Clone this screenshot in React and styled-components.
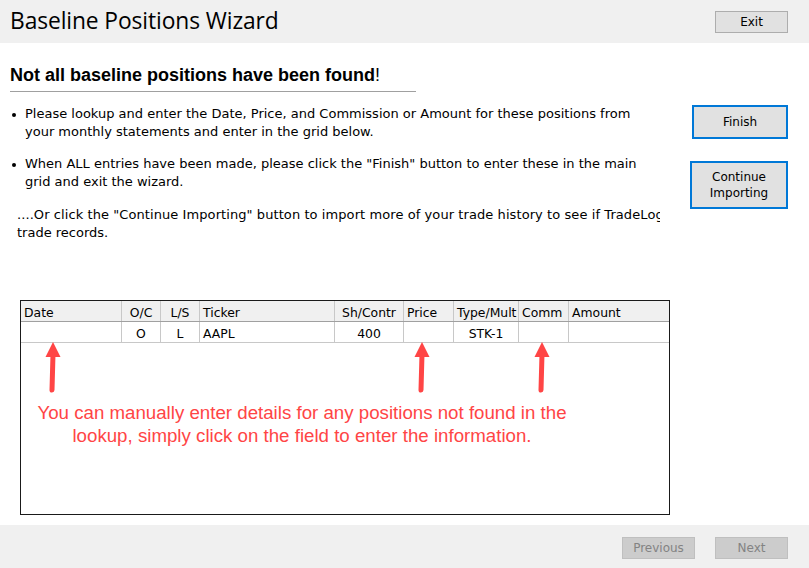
import React from "react";
import styled, { createGlobalStyle } from "styled-components";

const Global = createGlobalStyle`
  html, body { margin: 0; padding: 0; background: #ffffff; }
  * { box-sizing: border-box; }
`;

const Page = styled.div`
  width: 809px;
  height: 568px;
  display: flex;
  flex-direction: column;
  background: #ffffff;
  font-family: "DejaVu Sans", Tahoma, sans-serif;
  color: #000;
  overflow: hidden;
`;

const Bar = styled.div`
  height: 43px;
  flex: none;
  background: #f0f0f0;
  display: flex;
  align-items: ${(p) => (p.$footer ? "flex-start" : "center")};
  justify-content: ${(p) => (p.$footer ? "flex-end" : "space-between")};
  padding: ${(p) => (p.$footer ? "12px 21px 0 0" : "0 21px 0 10px")};
  gap: 20px;
`;

const Title = styled.h1`
  margin: 0 0 3px 0;
  font-family: "Open Sans", "Noto Sans", sans-serif;
  font-weight: 400;
  font-size: 22.8px;
  letter-spacing: -0.1px;
  color: #000;
`;

const WinButton = styled.button`
  width: 73px;
  height: 22px;
  margin-top: ${(p) => (p.$footer ? "0" : "1px")};
  background: ${(p) => (p.disabled ? "#cccccc" : "#e1e1e1")};
  border: 1px solid ${(p) => (p.disabled ? "#bfbfbf" : "#adadad")};
  color: ${(p) => (p.disabled ? "#838383" : "#000")};
  font-family: "DejaVu Sans", Tahoma, sans-serif;
  font-size: 12px;
  padding: 0;
`;

const Body = styled.div`
  flex: 1;
  display: flex;
  flex-direction: column;
  padding: 22px 0 0 0;
`;

const Heading = styled.h2`
  margin: 0 0 0 10px;
  width: 406px;
  font-family: "Liberation Sans", Arial, sans-serif;
  font-weight: 700;
  font-size: 18px;
  line-height: 20px;
  padding-bottom: 6px;
  border-bottom: 1px solid #a0a0a0;
`;

const Bang = styled.span`
  font-weight: 400;
`;

const InfoRow = styled.div`
  display: flex;
  margin-top: 13px;
  height: 195px;
`;

const TextCol = styled.div`
  width: 660px;
  flex: none;
  overflow: hidden;
  font-size: 13px;
  line-height: 17.5px;
`;

const Bullet = styled.div`
  display: flex;
  padding-left: 12px;
  margin-bottom: ${(p) => p.$mb}px;
  &::before {
    content: "";
    flex: none;
    width: 4px;
    height: 4px;
    border-radius: 50%;
    background: #000;
    margin: 8px 9px 0 0;
  }
`;

const BulletText = styled.div`
  width: 625px;
`;

const Para = styled.div`
  padding-left: 17px;
`;

const ClipLine = styled.div`
  white-space: nowrap;
  overflow: hidden;
  width: 643px;
  letter-spacing: 0.08px;
`;

const ButtonCol = styled.div`
  flex: 1;
  display: flex;
  flex-direction: column;
  align-items: flex-start;
`;

const BlueButton = styled.button`
  width: ${(p) => p.$w}px;
  height: ${(p) => p.$h}px;
  margin-left: ${(p) => p.$ml}px;
  margin-top: ${(p) => p.$mt}px;
  background: #e1e1e1;
  border: 2px solid #0078d7;
  font-family: "DejaVu Sans", Tahoma, sans-serif;
  font-size: 12px;
  line-height: 16px;
  padding: 0;
  color: #000;
`;

const GridBox = styled.div`
  position: relative;
  margin: 0 0 10px 20px;
  width: 650px;
  height: 215px;
  border: 1px solid #1a1a1a;
  background: #fff;
  font-size: 12.4px;
`;

const cols = "101px 39px 39px 135px 69px 50px 65px 50px 100px";

const GridRow = styled.div`
  display: grid;
  grid-template-columns: ${cols};
  height: 21px;
  background: ${(p) => (p.$head ? "#f0f0f0" : "#fff")};
  border-bottom: 1px solid ${(p) => (p.$head ? "#a0a0a0" : "#c8c8c8")};
`;

const Cell = styled.div`
  display: flex;
  align-items: center;
  justify-content: ${(p) => (p.$center ? "center" : "flex-start")};
  padding-left: ${(p) => (p.$center ? 0 : 3)}px;
  padding-top: 2px;
  border-right: 1px solid ${(p) => (p.$last ? "transparent" : "#c8c8c8")};
  white-space: nowrap;
  overflow: hidden;
`;

const Arrow = styled.svg`
  position: absolute;
  top: 41px;
  left: ${(p) => p.$x}px;
  width: 20px;
  height: 50px;
  overflow: visible;
`;

const Note = styled.div`
  position: absolute;
  left: 15px;
  top: 100px;
  width: 532px;
  text-align: center;
  font-family: "Liberation Sans", Arial, sans-serif;
  font-size: 18.7px;
  line-height: 23px;
  color: #ff4545;
`;

const RedArrow = ({ x }) => (
  <Arrow $x={x} viewBox="0 0 20 50">
    <path d="M10 12 L9 48" stroke="#ff4545" strokeWidth="5" strokeLinecap="round" fill="none" />
    <polygon points="10,0 2.5,15 17.5,15" fill="#ff4545" />
  </Arrow>
);

const headers = [
  ["Date", false],
  ["O/C", true],
  ["L/S", true],
  ["Ticker", false],
  ["Sh/Contr", true],
  ["Price", false],
  ["Type/Mult", false],
  ["Comm", false],
  ["Amount", false],
];

const row = [
  ["", false],
  ["O", true],
  ["L", true],
  ["AAPL", false],
  ["400", true],
  ["", false],
  ["STK-1", true],
  ["", false],
  ["", false],
];

export default function App() {
  return (
    <Page>
      <Global />
      <Bar>
        <Title>Baseline Positions Wizard</Title>
        <WinButton>Exit</WinButton>
      </Bar>
      <Body>
        <Heading>
          Not all baseline positions have been found<Bang>!</Bang>
        </Heading>
        <InfoRow>
          <TextCol>
            <Bullet $mb={15}>
              <BulletText>
                Please lookup and enter the Date, Price, and Commission or Amount for these positions from your monthly statements and enter in the grid below.
              </BulletText>
            </Bullet>
            <Bullet $mb={16}>
              <BulletText>
                When ALL entries have been made, please click the "Finish" button to enter these in the main grid and exit the wizard.
              </BulletText>
            </Bullet>
            <Para>
              <ClipLine>
                ....Or click the "Continue Importing" button to import more of your trade history to see if TradeLog can find these
              </ClipLine>
              <div>trade records.</div>
            </Para>
          </TextCol>
          <ButtonCol>
            <BlueButton $w={96} $h={34} $ml={32} $mt={0}>Finish</BlueButton>
            <BlueButton $w={98} $h={48} $ml={30} $mt={22}>
              Continue
              <br />
              Importing
            </BlueButton>
          </ButtonCol>
        </InfoRow>
        <GridBox>
          <GridRow $head>
            {headers.map(([t, c], i) => (
              <Cell key={i} $center={c} $last={i === headers.length - 1}>
                {t}
              </Cell>
            ))}
          </GridRow>
          <GridRow>
            {row.map(([t, c], i) => (
              <Cell key={i} $center={c} $last={i === row.length - 1}>
                {t}
              </Cell>
            ))}
          </GridRow>
          <RedArrow x={22} />
          <RedArrow x={391} />
          <RedArrow x={511} />
          <Note>
            You can manually enter details for any positions not found in the
            <br />
            lookup, simply click on the field to enter the information.
          </Note>
        </GridBox>
      </Body>
      <Bar $footer>
        <WinButton $footer disabled>Previous</WinButton>
        <WinButton $footer disabled>Next</WinButton>
      </Bar>
    </Page>
  );
}
